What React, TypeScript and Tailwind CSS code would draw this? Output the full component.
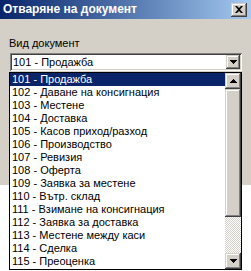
import React from "react"

const items = [
  "101 - Продажба",
  "102 - Даване на консигнация",
  "103 - Местене",
  "104 - Доставка",
  "105 - Касов приход/разход",
  "106 - Производство",
  "107 - Ревизия",
  "108 - Оферта",
  "109 - Заявка за местене",
  "110 - Вътр. склад",
  "111 - Взимане на консигнация",
  "112 - Заявка за доставка",
  "113 - Местене между каси",
  "114 - Сделка",
  "115 - Преоценка",
]

const raised =
  "bg-[#d4d0c8] shadow-[inset_-1px_-1px_0_#404040,inset_1px_1px_0_#d4d0c8,inset_-2px_-2px_0_#808080,inset_2px_2px_0_#ffffff]"

function Arrow({ up }: { up?: boolean }) {
  return (
    <svg width="7" height="4" viewBox="0 0 7 4" className={up ? "rotate-180" : ""}>
      <path d="M0 0h7v1H6v1H5v1H4v1H3V3H2V2H1V1H0z" fill="#000" />
    </svg>
  )
}

export default function App() {
  return (
    <div className="relative w-[251px] h-[271px] overflow-hidden bg-white font-['Liberation_Sans',Arial,sans-serif] text-[11px] text-black">
      <div className="h-[185px] bg-[#d4d0c8] flex flex-col">
        <div className="h-[19px] bg-gradient-to-r from-[#0a246a] to-[#a6caf0] flex items-center justify-between pl-[3px] pr-[4px]">
          <span className="text-white font-bold text-[12px] leading-[19px]">Отваряне на документ</span>
          <div className={`w-[16px] h-[14px] flex items-center justify-center ${raised}`}>
            <svg width="8" height="7" viewBox="0 0 8 7">
              <path d="M0 0h2l2 2 2-2h2L5 3.5 8 7H6L4 5 2 7H0l3-3.5z" fill="#000" />
            </svg>
          </div>
        </div>
        <div className="pl-[9px] pt-[18px]">
          <div className="leading-[13px] h-[16px]">Вид документ</div>
          <div className="ml-[1px] w-[232px] h-[18px] bg-white flex items-center justify-between pl-[3px] pr-[2px] shadow-[inset_1px_1px_0_#808080,inset_-1px_-1px_0_#ffffff,inset_2px_2px_0_#404040,inset_-2px_-2px_0_#d4d0c8]">
            <span className="leading-[13px]">101 - Продажба</span>
            <div className={`w-[14px] h-[14px] flex items-center justify-center ${raised}`}>
              <Arrow />
            </div>
          </div>
        </div>
      </div>

      <div className="absolute left-[9px] top-[72px] w-[233px] h-[198px] border border-black bg-white flex">
        <div className="flex-1 flex flex-col pt-0">
          {items.map((t, i) => (
            <div
              key={t}
              className={`h-[13px] leading-[13px] pl-[2px] whitespace-nowrap overflow-hidden ${
                i === 0 ? "bg-[#0a246a] text-white" : ""
              }`}
            >
              {t}
            </div>
          ))}
        </div>
        <div className="w-[16px] flex flex-col">
          <div className={`h-[16px] flex items-center justify-center ${raised}`}>
            <Arrow up />
          </div>
          <div className={`h-[128px] ${raised}`} />
          <div className="flex-1 bg-[repeating-conic-gradient(#ffffff_0%_25%,#d4d0c8_0%_50%)] bg-[length:2px_2px]" />
          <div className={`h-[16px] flex items-center justify-center ${raised}`}>
            <Arrow />
          </div>
        </div>
      </div>
    </div>
  )
}
